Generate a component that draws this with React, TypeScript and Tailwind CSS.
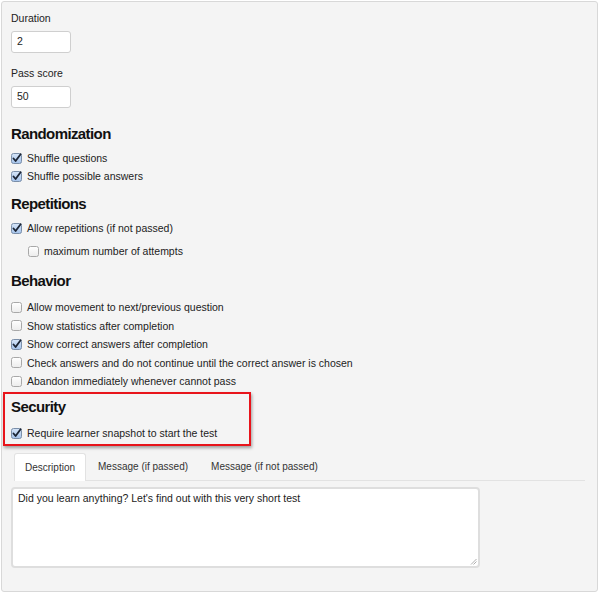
import React from "react";

const font = { fontFamily: "'Liberation Sans', Arial, sans-serif" };

function Box({ checked }: { checked: boolean }) {
  return (
    <svg width="11" height="11" viewBox="0 0 11 11" className="shrink-0">
      <defs>
        <linearGradient id={checked ? "gc" : "gu"} x1="0" y1="0" x2="0" y2="1">
          <stop offset="0" stopColor={checked ? "#d6e5f8" : "#ffffff"} />
          <stop offset="1" stopColor={checked ? "#a4c2ea" : "#ececec"} />
        </linearGradient>
      </defs>
      <rect x="0.5" y="0.5" width="10" height="10" rx="2" fill={`url(#${checked ? "gc" : "gu"})`} stroke={checked ? "#7a8ea8" : "#a8a8a8"} />
      {checked && (
        <path d="M2.5 5.5 L4.6 8 L9.6 1.2" fill="none" stroke="#1b2433" strokeWidth="1.8" strokeLinecap="round" strokeLinejoin="round" />
      )}
    </svg>
  );
}

function Check({ checked, label, indent, h = "h-[18px]" }: { checked: boolean; label: string; indent?: boolean; h?: string }) {
  return (
    <div className={`flex items-center gap-[5px] ${h} ${indent ? "pl-[17px]" : ""}`}>
      <Box checked={checked} />
      <span className="text-[10.5px] text-[#222] leading-none">{label}</span>
    </div>
  );
}

function Heading({ children }: { children: React.ReactNode }) {
  return <div className="text-[15px] text-[#111] leading-none font-bold tracking-[-0.6px] h-[15px]">{children}</div>;
}

export default function App() {
  return (
    <div className="w-[600px] h-[594px] bg-white pt-[1px] pl-[1px]" style={font}>
      <div className="w-[597px] h-[591px] bg-[#f4f4f4] border border-[#d8d8d8] rounded-[3px] pl-[9px] pt-[11px] flex flex-col">
        <div className="text-[10.5px] text-[#222] leading-none h-[12px]">Duration</div>
        <div className="mt-[6px] w-[60px] h-[22px] bg-white border border-[#cfcfcf] rounded-[3px] text-[10.5px] text-[#222] px-[5px] flex items-center">2</div>
        <div className="mt-[15px] text-[10.5px] text-[#222] leading-none h-[12px]">Pass score</div>
        <div className="mt-[6px] w-[60px] h-[22px] bg-white border border-[#cfcfcf] rounded-[3px] text-[10.5px] text-[#222] px-[5px] flex items-center">50</div>

        <div className="mt-[18px]"><Heading>Randomization</Heading></div>
        <div className="mt-[8px] flex flex-col">
          <Check checked label="Shuffle questions" />
          <Check checked label="Shuffle possible answers" />
        </div>

        <div className="mt-[11px]"><Heading>Repetitions</Heading></div>
        <div className="mt-[8px] flex flex-col">
          <Check checked label="Allow repetitions (if not passed)" />
          <div className="h-[5px]" />
          <Check checked={false} indent label="maximum number of attempts" />
        </div>

        <div className="mt-[13px]"><Heading>Behavior</Heading></div>
        <div className="mt-[10px] flex flex-col">
          <Check checked={false} h="h-[18.5px]" label="Allow movement to next/previous question" />
          <Check checked={false} h="h-[18.5px]" label="Show statistics after completion" />
          <Check checked h="h-[18.5px]" label="Show correct answers after completion" />
          <Check checked={false} h="h-[18.5px]" label="Check answers and do not continue until the correct answer is chosen" />
          <Check checked={false} h="h-[18.5px]" label="Abandon immediately whenever cannot pass" />
        </div>

        <div className="relative mt-[8px]">
          <div className="absolute left-[-8px] top-[-7px] w-[248px] h-[54px] border-2 border-[#e8141b] shadow-[1px_2px_3px_rgba(0,0,0,0.35)] pointer-events-none" />
          <Heading>Security</Heading>
          <div className="mt-[11px]">
            <Check checked label="Require learner snapshot to start the test" />
          </div>
        </div>

        <div className="mt-[10px] ml-[3px] mr-[12px] flex items-end border-b border-[#e2e2e2] h-[28px]">
          <div className="h-[28px] px-[10px] flex items-center bg-white border border-[#e2e2e2] border-b-0 rounded-t-[3px] text-[10px] text-[#333] -mb-px">Description</div>
          <div className="h-[27px] px-[12px] flex items-center text-[10px] text-[#333]">Message (if passed)</div>
          <div className="h-[27px] px-[11px] flex items-center text-[10px] text-[#333]">Message (if not passed)</div>
        </div>

        <div className="mt-[6px] w-[469px] h-[81px] bg-white border-2 border-[#dedede] rounded-[4px] relative px-[5px] pt-[3px] text-[10.5px] leading-[13px] text-[#222]">
          Did you learn anything? Let's find out with this very short test
          <svg className="absolute right-[1px] bottom-[1px]" width="7" height="7" viewBox="0 0 7 7">
            <path d="M1 6.5 L6.5 1 M3.5 6.5 L6.5 3.5" stroke="#999" strokeWidth="0.8" />
          </svg>
        </div>
      </div>
    </div>
  );
}
